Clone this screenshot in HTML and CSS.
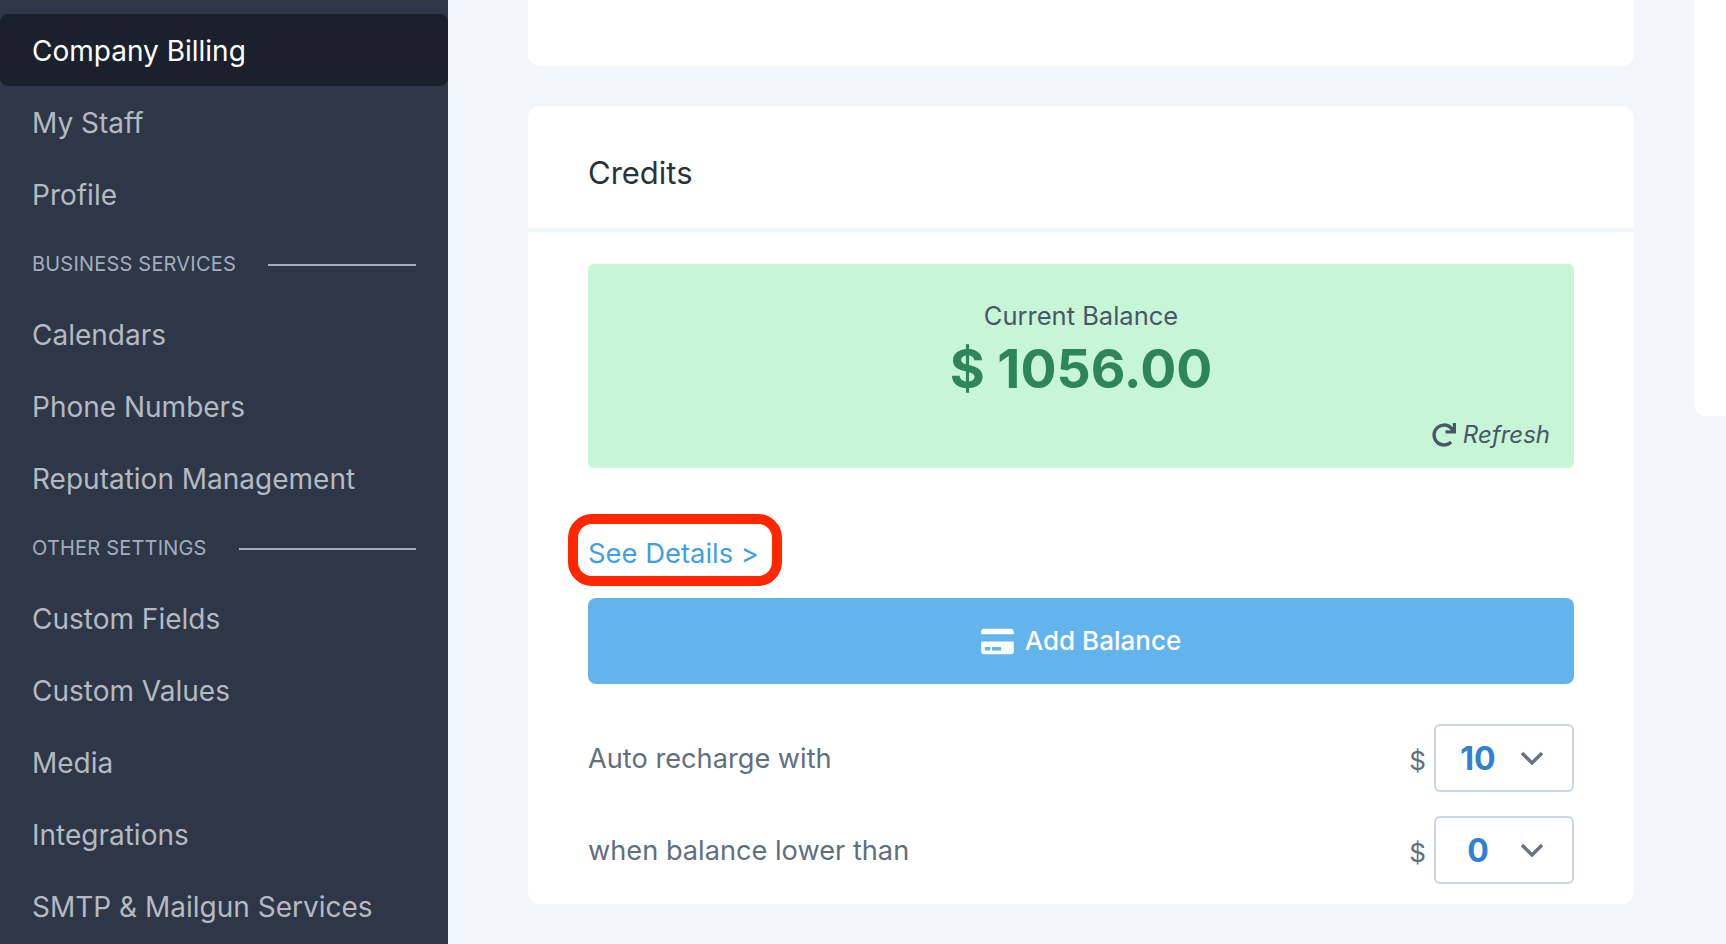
FILE: index.html
```html
<!DOCTYPE html>
<html lang="en">
<head>
    <meta charset="UTF-8">
    <title>Company Billing</title>
    <link rel="stylesheet" href="styles.css">
</head>
<body>
    <aside class="sidebar">
        <a class="nav-item active" href="#">Company Billing</a>
        <a class="nav-item" href="#">My Staff</a>
        <a class="nav-item" href="#">Profile</a>
        <div class="nav-section"><span>BUSINESS SERVICES</span></div>
        <a class="nav-item" href="#">Calendars</a>
        <a class="nav-item" href="#">Phone Numbers</a>
        <a class="nav-item" href="#">Reputation Management</a>
        <div class="nav-section"><span>OTHER SETTINGS</span></div>
        <a class="nav-item" href="#">Custom Fields</a>
        <a class="nav-item" href="#">Custom Values</a>
        <a class="nav-item" href="#">Media</a>
        <a class="nav-item" href="#">Integrations</a>
        <a class="nav-item" href="#">SMTP &amp; Mailgun Services</a>
    </aside>
    <main class="content">
        <div class="column">
            <div class="card card-top"></div>
            <section class="card">
                <h2 class="card-header">Credits</h2>
                <div class="card-body">
                    <div class="balance">
                        <div class="balance-label">Current Balance</div>
                        <div class="balance-amount">$ 1056.00</div>
                        <a class="refresh" href="#">
                            <svg class="refresh-icon" viewBox="0 0 512 512"><path d="M500.33 0h-47.41a12 12 0 0 0-12 12.57l4 82.76A247.42 247.42 0 0 0 256 8C119.34 8 7.9 119.53 8 256.19 8.1 393.07 119.1 504 256 504a247.1 247.1 0 0 0 166.18-63.91 12 12 0 0 0 .48-17.43l-34-34a12 12 0 0 0-16.38-.55A176 176 0 1 1 402.1 157.8l-101.53-4.87a12 12 0 0 0-12.57 12v47.41a12 12 0 0 0 12 12h200.33a12 12 0 0 0 12-12V12a12 12 0 0 0-12-12z"/></svg>
                            <span>Refresh</span>
                        </a>
                    </div>
                    <div class="details-row">
                        <a class="details-link" href="#">See Details &gt;</a>
                    </div>
                    <button class="add-balance" type="button">
                        <svg class="card-icon" viewBox="0 0 576 512"><path d="M0 432c0 26.5 21.5 48 48 48h480c26.5 0 48-21.5 48-48V256H0v176zm192-68c0-6.6 5.4-12 12-12h136c6.6 0 12 5.4 12 12v40c0 6.6-5.4 12-12 12H204c-6.6 0-12-5.4-12-12v-40zm-128 0c0-6.6 5.4-12 12-12h72c6.6 0 12 5.4 12 12v40c0 6.6-5.4 12-12 12H76c-6.6 0-12-5.4-12-12v-40zM576 80v48H0V80c0-26.5 21.5-48 48-48h480c26.5 0 48 21.5 48 48z"/></svg>
                        <span class="add-balance-label">Add Balance</span>
                    </button>
                    <div class="recharge-list">
                        <div class="recharge-row">
                            <span>Auto recharge with</span>
                            <div class="amount-field">
                                <span class="currency">$</span>
                                <div class="select-box">
                                    <span class="select-value">10</span>
                                    <svg class="chevron" viewBox="0 0 24 14"><path d="M2 2l10 10L22 2"/></svg>
                                </div>
                            </div>
                        </div>
                        <div class="recharge-row">
                            <span>when balance lower than</span>
                            <div class="amount-field">
                                <span class="currency">$</span>
                                <div class="select-box">
                                    <span class="select-value">0</span>
                                    <svg class="chevron" viewBox="0 0 24 14"><path d="M2 2l10 10L22 2"/></svg>
                                </div>
                            </div>
                        </div>
                    </div>
                </div>
            </section>
        </div>
        <div class="side-card"></div>
    </main>
</body>
</html>
```

FILE: styles.css
```css
* {
    box-sizing: border-box;
}
html, body {
    height: 100%;
}
body {
    margin: 0;
    display: flex;
    height: 944px;
    overflow: hidden;
    font-family: Inter, "Liberation Sans", sans-serif;
    background-color: #f1f6fa;
    color: #2d3748;
}
.sidebar {
    width: 448px;
    flex-shrink: 0;
    padding-top: 14px;
    background-color: #2d3748;
}
.nav-item {
    display: flex;
    align-items: center;
    height: 72px;
    padding-left: 32px;
    padding-top: 1px;
    border-radius: 8px;
    font-size: 28px;
    color: #b5b9c2;
    text-decoration: none;
}
.nav-item.active {
    background-color: #1a202c;
    color: #ffffff;
}
.nav-section {
    display: flex;
    align-items: center;
    height: 68px;
    padding: 0 32px;
    font-size: 20px;
    letter-spacing: 0.2px;
    color: #a0aec0;
}
.nav-section::after {
    content: "";
    flex: 1;
    height: 2px;
    margin-top: 2px;
    margin-left: 32px;
    background-color: #a0aec0;
}
.content {
    flex: 1;
    display: flex;
    padding-left: 80px;
}
.column {
    width: 1106px;
    flex-shrink: 0;
}
.card {
    background-color: #ffffff;
    border-radius: 12px;
}
.card-top {
    height: 66px;
    margin-bottom: 40px;
    border-radius: 0 0 12px 12px;
}
.card-header {
    height: 126px;
    margin: 0;
    padding: 11px 60px 0;
    display: flex;
    align-items: center;
    border-bottom: 4px solid #f1f6fa;
    font-size: 31px;
    font-weight: 400;
    color: #2a3238;
}
.card-body {
    padding: 32px 60px 20px;
}
.balance {
    height: 204px;
    padding-top: 35px;
    display: flex;
    flex-direction: column;
    align-items: center;
    background-color: #c6f6d5;
    border-radius: 6px;
    color: #4a5568;
}
.balance-label {
    font-size: 25.5px;
    line-height: 34px;
}
.balance-amount {
    font-size: 53.5px;
    line-height: 72px;
    font-weight: 700;
    color: #2f855a;
}
.refresh {
    align-self: flex-end;
    margin-top: 15px;
    margin-right: 24px;
    display: flex;
    align-items: center;
    font-size: 24px;
    font-style: italic;
    color: #4a5568;
    text-decoration: none;
}
.refresh-icon {
    width: 24px;
    height: 24px;
    margin-right: 7px;
    fill: #4a5568;
}
.details-row {
    display: flex;
    height: 130px;
    align-items: flex-end;
    padding-bottom: 25px;
}
.details-link {
    position: relative;
    font-size: 27.4px;
    line-height: 40px;
    color: #3f9fe2;
    text-decoration: none;
}
.details-link::after {
    content: "";
    position: absolute;
    left: -20px;
    right: -23px;
    top: -19px;
    bottom: -13px;
    border: 10px solid #ff2600;
    border-radius: 24px;
}
.add-balance {
    width: 100%;
    height: 86px;
    display: flex;
    align-items: center;
    justify-content: center;
    border: none;
    border-radius: 8px;
    background-color: #63b3ed;
    color: #ffffff;
    font-family: inherit;
    font-size: 26px;
    font-weight: 500;
}
.add-balance-label {
    margin-bottom: 1px;
}
.card-icon {
    width: 33px;
    height: 29px;
    margin-right: 11px;
    fill: #ffffff;
}
.recharge-list {
    display: flex;
    flex-direction: column;
    gap: 24px;
    margin-top: 40px;
}
.recharge-row {
    display: flex;
    justify-content: space-between;
    align-items: center;
    height: 68px;
    font-size: 27.2px;
    color: #5f6f7c;
}
.amount-field {
    display: flex;
    align-items: center;
}
.currency {
    margin-right: 8px;
    font-size: 26px;
    padding-top: 4px;
}
.select-box {
    width: 140px;
    height: 68px;
    display: flex;
    align-items: center;
    border: 2px solid #cbd5e0;
    border-radius: 6px;
}
.select-value {
    width: 84px;
    text-align: center;
    font-size: 32px;
    font-weight: 700;
    color: #3182ce;
}
.chevron {
    width: 24px;
    height: 14px;
    fill: none;
    stroke: #6b7280;
    stroke-width: 3.5;
}
.side-card {
    width: 100%;
    height: 416px;
    margin-left: 60px;
    background-color: #ffffff;
    border-radius: 0 0 0 12px;
}
```
